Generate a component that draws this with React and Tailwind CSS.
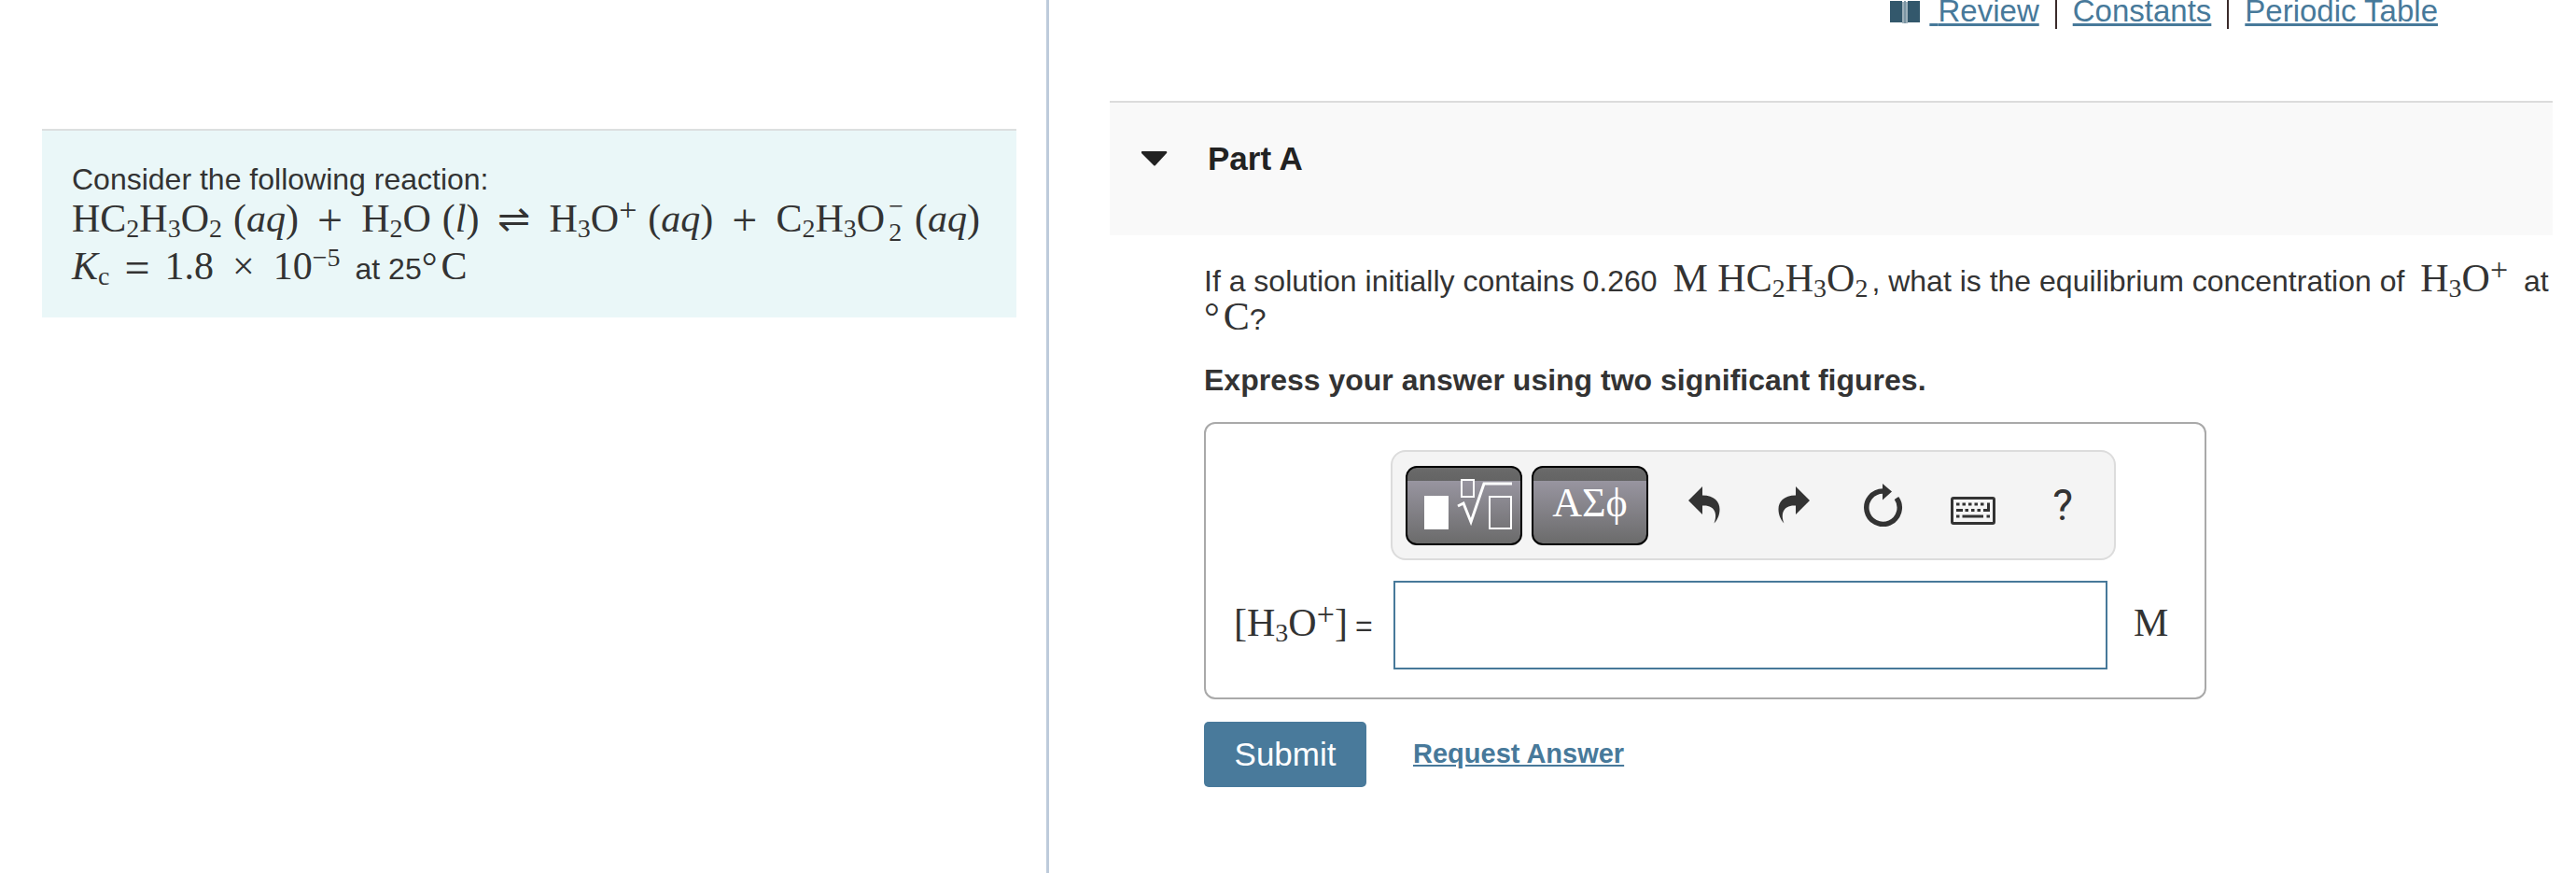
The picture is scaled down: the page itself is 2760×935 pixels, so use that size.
import React, { useState } from "react";

const Sub = ({ children }) => (
  <span className="relative top-[6px] text-[28px]">{children}</span>
);

const Sup = ({ children }) => (
  <span className="relative -top-[14px] text-[28px]">{children}</span>
);

const Tex = ({ children }) => (
  <span className="font-['Liberation_Serif',serif] text-[42px] leading-[30px] whitespace-nowrap">{children}</span>
);

const Phase = ({ children }) => (
  <span className="ml-3">
    (<i>{children}</i>)
  </span>
);

const Plus = () => <span className="relative top-1 mx-5 text-[48px]">+</span>;

const Hydronium = () => (
  <>
    H<Sub>3</Sub>O<span className="relative -top-[12px] text-[34px]">+</span>
  </>
);

const Celsius = () => (
  <Tex>
    °<span className="ml-1">C</span>
  </Tex>
);

const TemplateIcon = () => (
  <svg viewBox="0 0 120 80" className="h-20 w-[120px]" fill="none" stroke="#fff">
    <rect x="17" y="30" width="26" height="36" fill="#fff" stroke="none" />
    <rect x="57" y="13" width="13" height="18" strokeWidth="2" />
    <path d="M53 41l6-3 8 20 14-41h30" strokeWidth="3" />
    <rect x="87" y="31" width="23" height="34" strokeWidth="2" />
  </svg>
);

const UndoIcon = () => (
  <svg viewBox="0 0 34 40" className="h-10 w-[34px]" fill="#333">
    <path d="M15 0v9.500c13 0 18.500 7 18.500 15 0 5-2 11-6 15 4-10 1-20-12.500-19v9.500L0 15z" />
  </svg>
);

const RedoIcon = () => (
  <svg viewBox="0 0 34 40" className="h-10 w-[34px]" fill="#333">
    <path d="M19 0v9.500C6 9.500.5 16.500.5 24.500c0 5 2 11 6 15-4-10-1-20 12.500-19v9.500l15-15z" />
  </svg>
);

const ResetIcon = () => (
  <svg viewBox="0 0 42 46" className="h-[46px] w-[42px]" fill="none" stroke="#333">
    <path d="M20.500 8A17.700 17.700 0 1 0 35 15.500" strokeWidth="5.500" />
    <path d="M20 0l10 8.500-10 9z" fill="#333" stroke="none" />
  </svg>
);

const KeyboardIcon = () => (
  <svg viewBox="0 -11 48 41" className="h-[41px] w-12" fill="none" stroke="#333">
    <rect x="1.500" y="1.500" width="45" height="27" rx="1.500" strokeWidth="3" />
    <path
      d="M6 8h3.500m3 0H16m3 0h3.500m3 0H29m3 0h3.500M6 14.500h7m2.500 0H19m3 0h3.500m3 0H32m3 0h7M6 21h3.500m3 0H35m3.500 0H42M40.500 6.500v9.500"
      strokeWidth="3"
    />
  </svg>
);

const BookIcon = () => (
  <svg viewBox="0 0 32 26" className="h-[26px] w-8">
    <path d="M0 1h13v23H0zM19 1h13v23H19z" fill="#33586c" />
    <path d="M13 2h6v23h-6z" fill="#9db0ba" />
    <path d="M15 1h2v24h-2z" fill="#7c95a3" />
  </svg>
);

const tools = [
  { label: "Undo", icon: <UndoIcon /> },
  { label: "Redo", icon: <RedoIcon /> },
  { label: "Reset", icon: <ResetIcon /> },
  { label: "Keyboard shortcuts", icon: <KeyboardIcon /> },
];

const darkButton =
  "flex h-[85px] w-[125px] items-center justify-center rounded-xl border-2 border-black text-white bg-[linear-gradient(#6a6a6a_0,#646464_14px,#9895a0_14px,#6b6b6b_100%)]";

const Problem = () => (
  <aside className="w-[1124px] shrink-0 border-r-[3px] border-[#becbdb] pt-[138px] pr-8 pl-[45px]">
    <div className="border-t-2 border-[#dcdfdf] bg-[#eaf7f8] px-8 pt-8 pb-5 text-[32px]">
      <p className="leading-10">Consider the following reaction:</p>
      <p className="h-[49px] leading-[50px] whitespace-nowrap">
        <Tex>
          HC<Sub>2</Sub>H<Sub>3</Sub>O<Sub>2</Sub>
          <Phase>aq</Phase>
          <Plus />H<Sub>2</Sub>O
          <Phase>l</Phase>
          <span className="mx-5">⇌</span>
          <Hydronium />
          <Phase>aq</Phase>
          <Plus />C<Sub>2</Sub>H<Sub>3</Sub>O
          <span className="relative -top-[18px] ml-1 inline-flex flex-col text-[28px] leading-7">
            <span>−</span>
            <span>2</span>
          </span>
          <Phase>aq</Phase>
        </Tex>
      </p>
      <p className="h-[59px] leading-[54px] whitespace-nowrap">
        <Tex>
          <i>K</i>
          <Sub>c</Sub>
          <span className="relative top-1 mx-4 text-[48px]">=</span>1.8<span className="mx-5">×</span>10<Sup>−5</Sup>
        </Tex>
        <span className="ml-4">at 25</span>
        <Celsius />
      </p>
    </div>
  </aside>
);

const AnswerBox = () => {
  const [answer, setAnswer] = useState("");

  return (
    <div className="w-[1074px] max-w-full rounded-xl border-2 border-[#a9a9a9] pt-7 pr-8 pb-[30px] pl-[30px]">
      <div className="ml-[168px] flex h-[118px] w-[777px] items-center rounded-2xl border-2 border-[#dcdcdc] bg-[#f4f4f4] pl-[14px]">
        <button type="button" aria-label="Templates" className={darkButton}>
          <TemplateIcon />
        </button>
        <button
          type="button"
          aria-label="Symbols"
          className={`${darkButton} ml-[10px] pb-1 font-['Liberation_Serif',serif] text-[44px]`}
        >
          ΑΣϕ
        </button>
        <div className="ml-3 flex">
          {tools.map((tool) => (
            <button key={tool.label} type="button" aria-label={tool.label} className="flex w-24 items-center justify-center">
              {tool.icon}
            </button>
          ))}
          <button type="button" aria-label="Help" className="w-24 font-[Roboto,sans-serif] text-[46px] leading-[46px]">
            ?
          </button>
        </div>
      </div>
      <div className="mt-[22px] flex items-center">
        <label htmlFor="answer" className="w-[171px] shrink-0 text-[32px] leading-[48px] whitespace-nowrap">
          <Tex>
            [<Hydronium />]
          </Tex>
          <span className="ml-2">=</span>
        </label>
        <input
          id="answer"
          type="text"
          value={answer}
          onChange={(e) => setAnswer(e.target.value)}
          className="h-[95px] w-[765px] border-2 border-[#47799a] px-4 text-[32px]"
        />
        <span className="ml-7 text-[32px] leading-[48px]">
          <Tex>M</Tex>
        </span>
      </div>
    </div>
  );
};

const PartA = () => {
  const [open, setOpen] = useState(true);

  return (
    <section className="mt-[84px]">
      <header className="h-36 border-t-2 border-[#dcdcdc] bg-[#f9f9f9] pt-10 pl-[34px]">
        <button type="button" onClick={() => setOpen(!open)} className="flex items-center text-[#222]">
          <svg viewBox="0 0 28 16" className="h-4 w-7" fill="#222">
            <path d="M1 0h25q2 0 1 2L15 15q-1 1-2 0L0 2q-1-2 1-2z" />
          </svg>
          <span className="ml-[43px] text-[35px] leading-10 font-bold">Part A</span>
        </button>
      </header>
      {open && (
        <div className="pl-[101px]">
          <p className="pt-[29px] text-[32px] leading-[41px]">
            <span className="mr-2">If a solution initially contains 0.260 </span>
            <Tex>
              M HC<Sub>2</Sub>H<Sub>3</Sub>O<Sub>2</Sub>
            </Tex>
            <span className="mr-2 ml-1">, what is the equilibrium concentration of </span>
            <Tex>
              <Hydronium />
            </Tex>
            <span className="ml-2"> at</span>
            <br />
            <Celsius />?
          </p>
          <p className="pt-6 text-[32px] leading-[41px] font-bold">Express your answer using two significant figures.</p>
          <div className="mt-6">
            <AnswerBox />
          </div>
          <div className="mt-6 flex items-center gap-[50px]">
            <button type="button" className="h-[70px] w-[174px] rounded-[5px] bg-[#497a9b] text-[35px] text-white">
              Submit
            </button>
            <a href="#answer" className="text-[29px] font-bold text-[#47799a] underline">
              Request Answer
            </a>
          </div>
        </div>
      )}
    </section>
  );
};

const App = () => (
  <div className="flex min-h-screen bg-white font-['Liberation_Sans',sans-serif] text-[#333]">
    <Problem />
    <main className="min-w-0 flex-1 pr-[25px] pl-[65px]">
      <nav className="flex h-6 justify-end pr-[123px] text-[33px] leading-6 whitespace-pre text-[#47799a]">
        <BookIcon />
        <a href="#review" className="ml-[10px] underline decoration-3">
          {" "}Review
        </a>
        <span className="mx-[17px] h-[31px] w-0.5 bg-[#3a2a2a]" />
        <a href="#constants" className="underline decoration-3">
          Constants
        </a>
        <span className="mx-[17px] h-[31px] w-0.5 bg-[#3a2a2a]" />
        <a href="#periodic-table" className="underline decoration-3">
          Periodic Table
        </a>
      </nav>
      <PartA />
    </main>
  </div>
);

export default App;
